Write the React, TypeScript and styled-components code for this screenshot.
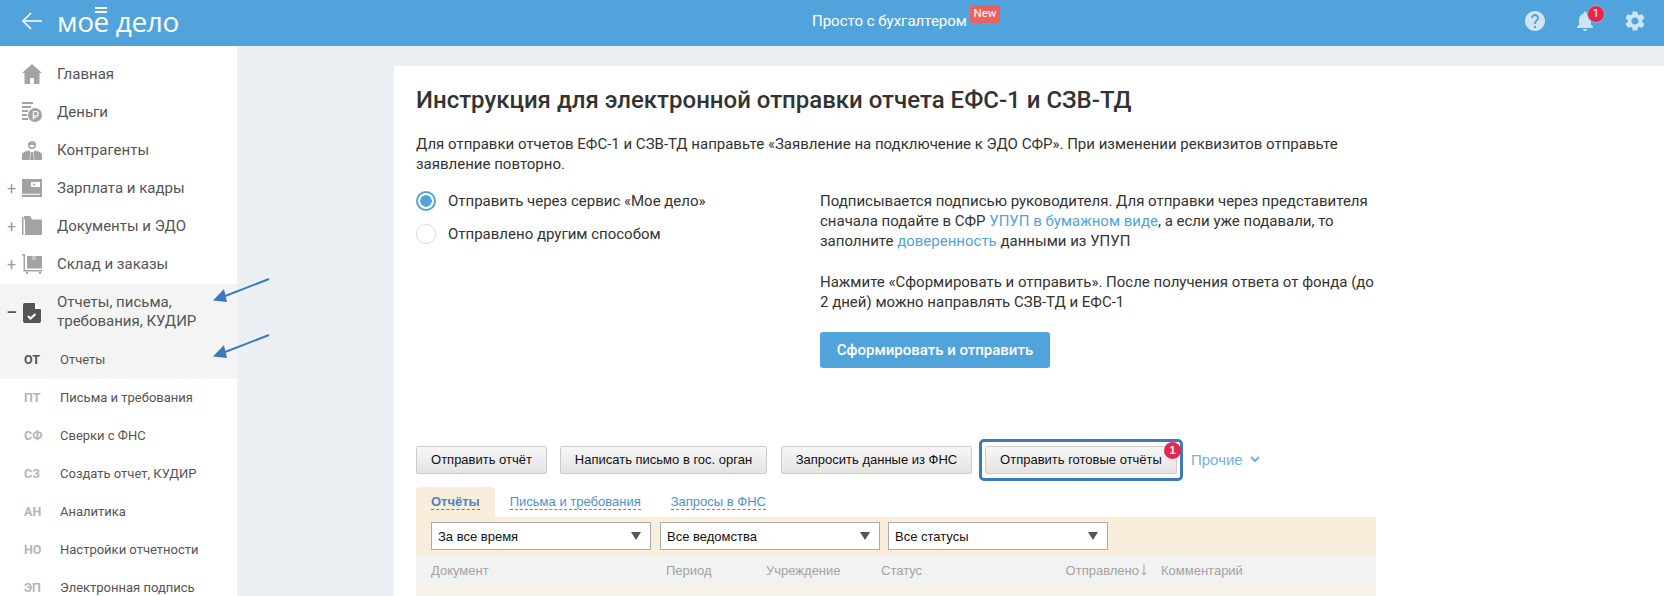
import React from "react";
import styled, { createGlobalStyle } from "styled-components";
import { MdHelp, MdNotifications, MdSettings } from "react-icons/md";

const Global = createGlobalStyle`
  html, body { margin: 0; padding: 0; background: #ecf0f4; }
  body { font-family: Roboto, "Noto Sans", sans-serif; color: #333; }
  * { box-sizing: border-box; }
`;

const Page = styled.div`
  position: relative;
  width: 1664px;
  height: 596px;
  overflow: hidden;
  display: flex;
  flex-direction: column;
`;

const Header = styled.header`
  height: 46px;
  flex: none;
  background: #51a4db;
  display: grid;
  grid-template-columns: 812px auto 1fr;
  align-items: center;
  color: #fff;
`;

const Brand = styled.div`
  display: flex;
  align-items: center;
  padding: 0 0 4px 21px;
  gap: 15px;
`;

const Logo = styled.div`
  position: relative;
  font-family: "Open Sans", Lato, sans-serif;
  font-size: 28px;
  line-height: 32px;
  font-weight: 500;
  letter-spacing: -0.4px;
  color: #fff;
  white-space: nowrap;
`;

const LogoBars = styled.span`
  position: absolute;
  left: 38px;
  top: 2px;
  width: 12px;
  height: 6px;
  border-top: 2px solid #fff;
  border-bottom: 2px solid #fff;
`;

const Promo = styled.div`
  position: relative;
  font-size: 15px;
  margin-top: -4px;
`;

const NewTag = styled.span`
  position: absolute;
  left: 158px;
  top: -7px;
  width: 30px;
  height: 18px;
  background: #ea6160;
  border-radius: 3px;
  font-size: 11.5px;
  line-height: 17px;
  text-align: center;
  color: #fff;
`;

const HeaderTools = styled.div`
  display: flex;
  justify-content: flex-end;
  align-items: center;
  gap: 28px;
  padding: 0 18px 4px 0;
`;

const Tool = styled.div`
  position: relative;
  width: 22px;
  height: 22px;
  color: #cfe5f6;
  & > svg {
    display: block;
    margin: -1px;
    width: 24px;
    height: 24px;
  }
`;

const ToolBadge = styled.span`
  position: absolute;
  left: 13px;
  top: -5px;
  width: 18px;
  height: 18px;
  border-radius: 50%;
  background: #e8244f;
  border: 1px solid #7fb9e2;
  color: #fff;
  font-size: 10.5px;
  line-height: 16px;
  text-align: center;
`;

const Body = styled.div`
  flex: 1;
  display: flex;
  min-height: 0;
`;

const Sidebar = styled.nav`
  width: 237px;
  flex: none;
  background: #fff;
  padding-top: 9px;
  overflow: hidden;
`;

const NavRow = styled.div<{ $active?: boolean }>`
  display: flex;
  align-items: center;
  height: 38px;
  background: ${(p) => (p.$active ? "#f4f4f4" : "transparent")};
  color: #555;
  font-size: 15px;
`;

const TallRow = styled(NavRow)`
  height: 57px;
  line-height: 19px;
  margin-top: 1px;
`;

const Toggle = styled.span<{ $open?: boolean }>`
  width: 22px;
  flex: none;
  text-align: center;
  padding-left: 1px;
  color: ${(p) => (p.$open ? "#555" : "#999")};
  font-size: 16px;
  font-weight: ${(p) => (p.$open ? 700 : 400)};
`;

const NavIcon = styled.span`
  width: 20px;
  height: 20px;
  flex: none;
  color: #a3a3a3;
  display: flex;
`;

const NavLabel = styled.span`
  margin-left: 15px;
`;

const TallLabel = styled(NavLabel)`
  margin-top: -2px;
`;

const SubRow = styled(NavRow)`
  font-size: 13px;
  padding: 0 0 2px 24px;
`;

const SubCode = styled.span<{ $active?: boolean }>`
  width: 36px;
  flex: none;
  font-weight: 700;
  font-size: 12.5px;
  color: ${(p) => (p.$active ? "#555" : "#b5b5b5")};
`;

const Main = styled.main`
  flex: 1;
  min-width: 0;
  padding: 20px 0 0 157px;
`;

const Card = styled.section`
  height: 100%;
  background: #fff;
  padding: 20px 288px 0 22px;
`;

const Title = styled.h1`
  margin: 0;
  font-size: 24px;
  line-height: 28px;
  font-weight: 500;
  color: #333;
`;

const Lead = styled.p`
  margin: 20px 0 0;
  font-size: 15px;
  line-height: 20px;
  color: #333;
`;

const Columns = styled.div`
  display: flex;
  margin-top: 17px;
  height: 255px;
`;

const RadioColumn = styled.div`
  width: 404px;
  flex: none;
  display: flex;
  flex-direction: column;
  gap: 13px;
`;

const RadioRow = styled.label`
  display: flex;
  align-items: center;
  height: 20px;
  gap: 12px;
  font-size: 15px;
`;

const RadioDot = styled.span<{ $on?: boolean }>`
  width: 20px;
  height: 20px;
  border-radius: 50%;
  flex: none;
  border: ${(p) => (p.$on ? "2px solid #51a4db" : "1px solid #dcdcdc")};
  background: ${(p) => (p.$on ? "radial-gradient(circle, #51a4db 0 5.5px, #fff 6px)" : "#fff")};
`;

const InfoColumn = styled.div`
  width: 560px;
  font-size: 15px;
  line-height: 20px;
  color: #333;
`;

const InfoPara = styled.p`
  margin: 0 0 21px;
`;

const InfoLink = styled.a`
  color: #51a4db;
`;

const Primary = styled.button`
  display: block;
  width: 230px;
  height: 36px;
  margin-top: -1px;
  background: #51a4db;
  border: 0;
  border-radius: 3px;
  color: #fff;
  font-family: Roboto, sans-serif;
  font-size: 15px;
  font-weight: 500;
`;

const Actions = styled.div`
  display: flex;
  align-items: center;
  height: 28px;
  font-family: "Liberation Sans", Arial, sans-serif;
`;

const LegacyButton = styled.button<{ $w: number; $gap: number }>`
  width: ${(p) => p.$w}px;
  height: 28px;
  margin-right: ${(p) => p.$gap}px;
  flex: none;
  padding: 0 0 2px;
  border: 1px solid #ccc;
  border-radius: 2px;
  background: linear-gradient(#f7f7f7, #e3e3e3);
  font-family: "Liberation Sans", Arial, sans-serif;
  font-size: 13px;
  color: #111;
`;

const Highlight = styled.div`
  position: relative;
  flex: none;
  padding: 4px 3px;
  margin-left: -6px;
  border: 3px solid #3b7bbd;
  border-radius: 5px;
  display: flex;
`;

const HighlightButton = styled(LegacyButton)`
  margin: 0;
`;

const CountBadge = styled.span`
  position: absolute;
  right: -1px;
  top: 0;
  width: 17px;
  height: 17px;
  border-radius: 50%;
  background: #e8244f;
  color: #fff;
  font-size: 11px;
  font-weight: 700;
  line-height: 17px;
  text-align: center;
`;

const More = styled.span`
  margin: 0 0 2px 8px;
  color: #6fb2e3;
  font-size: 15px;
  display: flex;
  align-items: center;
  gap: 7px;
`;

const Legacy = styled.div`
  font-family: "Liberation Sans", Arial, sans-serif;
  margin-top: 13px;
  width: 960px;
`;

const Tabs = styled.div`
  display: flex;
  height: 30px;
`;

const Tab = styled.div<{ $active?: boolean }>`
  padding: 7px 15px 0;
  background: ${(p) => (p.$active ? "#f9eddc" : "transparent")};
  border-radius: 4px 4px 0 0;
  font-size: 13px;
  font-weight: ${(p) => (p.$active ? 700 : 400)};
  color: ${(p) => (p.$active ? "#4a86bf" : "#4a92cf")};
`;

const TabText = styled.span`
  border-bottom: 1px dashed currentColor;
  line-height: 15px;
  display: inline-block;
`;

const Filters = styled.div`
  background: #f9eddc;
  height: 38px;
  display: flex;
  align-items: flex-start;
  gap: 9px;
  padding: 5px 0 0 15px;
`;

const Select = styled.div`
  width: 220px;
  height: 28px;
  background: #fff;
  border: 1px solid #aaa;
  display: flex;
  align-items: center;
  justify-content: space-between;
  padding: 0 9px 0 6px;
  font-size: 13px;
  color: #111;
  &:last-child {
    margin-left: -1px;
  }
`;

const Caret = styled.span`
  width: 0;
  height: 0;
  border-left: 5.5px solid transparent;
  border-right: 5.5px solid transparent;
  border-top: 8px solid #555;
`;

const TableHead = styled.div`
  display: grid;
  grid-template-columns: 235px 100px 115px 110px 156px auto;
  height: 30px;
  align-items: center;
  background: #f2f2f2;
  padding-left: 15px;
  font-size: 13px;
  color: #a3a3a3;
`;

const SortCell = styled.span`
  display: flex;
  justify-content: flex-end;
  align-items: center;
  gap: 2px;
`;

const CommentCell = styled.span`
  padding-left: 14px;
`;

const RowStub = styled.div`
  height: 12px;
  background: #f7f2ea;
`;

const Arrow = styled.svg<{ $top: number }>`
  position: absolute;
  left: 208px;
  top: ${(p) => p.$top}px;
  width: 66px;
  height: 30px;
  overflow: visible;
`;

const Home = () => (
  <svg viewBox="0 0 20 20" width="20" height="20" fill="currentColor"><path d="M10 0 0 9h2.500v11h5.500v-6h4v6h5.500V9H20z" /></svg>
);
const Money = () => (
  <svg viewBox="0 0 20 20" width="20" height="20" fill="currentColor">
    <path d="M0 0h11v2H0zM0 4h9v2H0zM0 8h6v2H0zM0 12h5v2H0zM0 16h6v2H0z" />
    <circle cx="13" cy="13" r="7" />
    <path d="M11.500 17.500V9.500h2.500a2.200 2.200 0 0 1 0 4.500h-3.500M10.500 15.500h4" stroke="#fff" strokeWidth="1.200" fill="none" />
  </svg>
);
const Person = () => (
  <svg viewBox="0 0 20 20" width="20" height="20" fill="currentColor">
    <path d="M6 3h8v2H6z" />
    <circle cx="10" cy="5" r="3.200" fill="none" stroke="currentColor" strokeWidth="1.600" />
    <path d="M0 20v-5c0-2.500 2.500-3.500 7-4.500l1.500 1.500L7.500 20zM20 20v-5c0-2.500-2.500-3.500-7-4.500L11.500 12l1 8z" />
    <path d="M9 12h2l1 8H8z" />
  </svg>
);
const Wallet = () => (
  <svg viewBox="0 0 20 20" width="20" height="20" fill="currentColor">
    <path d="M0 1h20v18H0z" />
    <path d="M9 4h9v5H9z" fill="#fff" /><circle cx="12" cy="6.500" r="1.100" />
    <path d="M0 16.300h18" stroke="#fff" strokeWidth="1" />
  </svg>
);
const Folder = () => (
  <svg viewBox="0 0 20 20" width="20" height="20" fill="currentColor">
    <path d="M0 1h1.500v18H0zM2 0h6l2 3.500h9a1 1 0 0 1 1 1V18a1 1 0 0 1-1 1H3V3.500H2z" />
  </svg>
);
const Cart = () => (
  <svg viewBox="0 0 20 20" width="20" height="20" fill="currentColor">
    <path d="M0 0h3v16h17v1.500H1.500V1.500H0z" />
    <path d="M5 2h15v12.500H5z" />
    <path d="M10 2h4v4h-4z" fill="#fff" opacity=".35" />
    <circle cx="5" cy="19" r="1.200" /><circle cx="18" cy="19" r="1.200" />
  </svg>
);
const Report = () => (
  <svg viewBox="0 0 20 20" width="20" height="20">
    <path d="M3 0h9.500L19 6.500V18a2 2 0 0 1-2 2H3a2 2 0 0 1-2-2V2a2 2 0 0 1 2-2z" fill="#555" />
    <path d="M13 0l6 6h-6z" fill="#fff" />
    <path d="m6 13 2.500 2.500L13.500 11" stroke="#fff" strokeWidth="2" fill="none" />
  </svg>
);
const Back = () => (
  <svg width="21" height="18" viewBox="0 0 21 18" fill="none" stroke="#fff" strokeWidth="1.600"><path d="M21 9H2M10 1 2 9l8 8" /></svg>
);
const Chevron = () => (
  <svg width="10" height="7" viewBox="0 0 10 7" fill="none" stroke="#6fb2e3" strokeWidth="2"><path d="m1 1 4 4 4-4" /></svg>
);
const SortArrow = () => (
  <svg width="6" height="14" viewBox="0 0 6 14" fill="none" stroke="#a3a3a3" strokeWidth="1"><path d="M3 1v11M1 9.500 3 12l2-2.500" /></svg>
);
const AnnotationArrow = ({ top }: { top: number }) => (
  <Arrow $top={top} viewBox="0 0 66 30">
    <path d="M61 1 12 20" stroke="#3b7bbd" strokeWidth="2" />
    <path d="M5 22.500 16 11l3 13z" fill="#3b7bbd" />
  </Arrow>
);

const mainNav = [
  { label: "Главная", icon: <Home /> },
  { label: "Деньги", icon: <Money /> },
  { label: "Контрагенты", icon: <Person /> },
  { label: "Зарплата и кадры", icon: <Wallet />, plus: true },
  { label: "Документы и ЭДО", icon: <Folder />, plus: true },
  { label: "Склад и заказы", icon: <Cart />, plus: true },
];

const subNav = [
  ["ОТ", "Отчеты"],
  ["ПТ", "Письма и требования"],
  ["СФ", "Сверки с ФНС"],
  ["СЗ", "Создать отчет, КУДИР"],
  ["АН", "Аналитика"],
  ["НО", "Настройки отчетности"],
  ["ЭП", "Электронная подпись"],
];

export default function App() {
  return (
    <Page>
      <Global />
      <Header>
        <Brand>
          <Back />
          <Logo>
            мое дело
            <LogoBars />
          </Logo>
        </Brand>
        <Promo>
          Просто с бухгалтером
          <NewTag>New</NewTag>
        </Promo>
        <HeaderTools>
          <Tool><MdHelp /></Tool>
          <Tool>
            <MdNotifications />
            <ToolBadge>1</ToolBadge>
          </Tool>
          <Tool><MdSettings /></Tool>
        </HeaderTools>
      </Header>
      <Body>
        <Sidebar>
          {mainNav.map((n) => (
            <NavRow key={n.label}>
              <Toggle>{n.plus ? "+" : ""}</Toggle>
              <NavIcon>{n.icon}</NavIcon>
              <NavLabel>{n.label}</NavLabel>
            </NavRow>
          ))}
          <TallRow $active>
            <Toggle $open>–</Toggle>
            <NavIcon><Report /></NavIcon>
            <TallLabel>Отчеты, письма,<br />требования, КУДИР</TallLabel>
          </TallRow>
          {subNav.map(([code, label], i) => (
            <SubRow key={code} $active={i === 0}>
              <SubCode $active={i === 0}>{code}</SubCode>
              {label}
            </SubRow>
          ))}
        </Sidebar>
        <Main>
          <Card>
            <Title>Инструкция для электронной отправки отчета ЕФС-1 и СЗВ-ТД</Title>
            <Lead>
              Для отправки отчетов ЕФС-1 и СЗВ-ТД направьте «Заявление на подключение к ЭДО СФР». При изменении реквизитов отправьте<br />
              заявление повторно.
            </Lead>
            <Columns>
              <RadioColumn>
                <RadioRow><RadioDot $on />Отправить через сервис «Мое дело»</RadioRow>
                <RadioRow><RadioDot />Отправлено другим способом</RadioRow>
              </RadioColumn>
              <InfoColumn>
                <InfoPara>
                  Подписывается подписью руководителя. Для отправки через представителя<br />
                  сначала подайте в СФР <InfoLink>УПУП в бумажном виде</InfoLink>, а если уже подавали, то<br />
                  заполните <InfoLink>доверенность</InfoLink> данными из УПУП
                </InfoPara>
                <InfoPara>
                  Нажмите «Сформировать и отправить». После получения ответа от фонда (до<br />
                  2 дней) можно направлять СЗВ-ТД и ЕФС-1
                </InfoPara>
                <Primary>Сформировать и отправить</Primary>
              </InfoColumn>
            </Columns>
            <Actions>
              <LegacyButton $w={131} $gap={13}>Отправить отчёт</LegacyButton>
              <LegacyButton $w={207} $gap={14}>Написать письмо в гос. орган</LegacyButton>
              <LegacyButton $w={191} $gap={13}>Запросить данные из ФНС</LegacyButton>
              <Highlight>
                <HighlightButton $w={192} $gap={0}>Отправить готовые отчёты</HighlightButton>
                <CountBadge>1</CountBadge>
              </Highlight>
              <More>Прочие <Chevron /></More>
            </Actions>
            <Legacy>
              <Tabs>
                <Tab $active><TabText>Отчёты</TabText></Tab>
                <Tab><TabText>Письма и требования</TabText></Tab>
                <Tab><TabText>Запросы в ФНС</TabText></Tab>
              </Tabs>
              <Filters>
                <Select>За все время<Caret /></Select>
                <Select>Все ведомства<Caret /></Select>
                <Select>Все статусы<Caret /></Select>
              </Filters>
              <TableHead>
                <span>Документ</span>
                <span>Период</span>
                <span>Учреждение</span>
                <span>Статус</span>
                <SortCell>Отправлено<SortArrow /></SortCell>
                <CommentCell>Комментарий</CommentCell>
              </TableHead>
              <RowStub />
            </Legacy>
          </Card>
        </Main>
      </Body>
      <AnnotationArrow top={278} />
      <AnnotationArrow top={334} />
    </Page>
  );
}
